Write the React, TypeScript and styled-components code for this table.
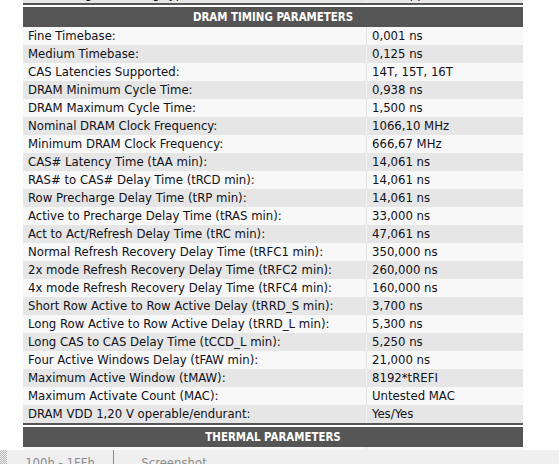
import styled, { createGlobalStyle } from "styled-components";

const GlobalStyle = createGlobalStyle`
  html, body {
    margin: 0;
    padding: 0;
    background: #ffffff;
    overflow: hidden;
  }
  body {
    font-family: "DejaVu Sans Condensed", "DejaVu Sans", Verdana, sans-serif;
    font-size: 13px;
    color: #101018;
  }
`;

type Row = [string, string];

const previousRow: Row = ["Module Signal Loading Type:", "Not supported"];

const timingRows: Row[] = [
  ["Fine Timebase:", "0,001 ns"],
  ["Medium Timebase:", "0,125 ns"],
  ["CAS Latencies Supported:", "14T, 15T, 16T"],
  ["DRAM Minimum Cycle Time:", "0,938 ns"],
  ["DRAM Maximum Cycle Time:", "1,500 ns"],
  ["Nominal DRAM Clock Frequency:", "1066,10 MHz"],
  ["Minimum DRAM Clock Frequency:", "666,67 MHz"],
  ["CAS# Latency Time (tAA min):", "14,061 ns"],
  ["RAS# to CAS# Delay Time (tRCD min):", "14,061 ns"],
  ["Row Precharge Delay Time (tRP min):", "14,061 ns"],
  ["Active to Precharge Delay Time (tRAS min):", "33,000 ns"],
  ["Act to Act/Refresh Delay Time (tRC min):", "47,061 ns"],
  ["Normal Refresh Recovery Delay Time (tRFC1 min):", "350,000 ns"],
  ["2x mode Refresh Recovery Delay Time (tRFC2 min):", "260,000 ns"],
  ["4x mode Refresh Recovery Delay Time (tRFC4 min):", "160,000 ns"],
  ["Short Row Active to Row Active Delay (tRRD_S min):", "3,700 ns"],
  ["Long Row Active to Row Active Delay (tRRD_L min):", "5,300 ns"],
  ["Long CAS to CAS Delay Time (tCCD_L min):", "5,250 ns"],
  ["Four Active Windows Delay (tFAW min):", "21,000 ns"],
  ["Maximum Active Window (tMAW):", "8192*tREFI"],
  ["Maximum Activate Count (MAC):", "Untested MAC"],
  ["DRAM VDD 1,20 V operable/endurant:", "Yes/Yes"],
];

const thermalRows: Row[] = [["Thermal Sensor:", "Incorporated"]];

const Viewport = styled.div`
  height: 450px;
  overflow: hidden;
`;

const Sheet = styled.div`
  width: 500px;
  margin: -15px 0 0 23px;
`;

const Section = styled.div`
  border-top: 2px solid #555555;
  padding-top: 2px;
`;

const SectionTitle = styled.div`
  height: 20px;
  background: #555555;
  color: #ffffff;
  font-weight: bold;
  font-size: 11.4px;
  line-height: 20px;
  text-align: center;
`;

const DataRow = styled.div<{ $odd: boolean }>`
  display: grid;
  grid-template-columns: 344px 1fr;
  height: 18px;
  line-height: 18px;
  background: ${({ $odd }) => ($odd ? "#f8f8f8" : "#e6e6e6")};
`;

const Label = styled.div<{ $odd: boolean }>`
  padding-left: 5px;
  white-space: nowrap;
  overflow: hidden;
  border-right: 1px solid ${({ $odd }) => ($odd ? "#e4e4e4" : "#f2f2f2")};
`;

const Value = styled.div`
  padding-left: 5px;
  white-space: nowrap;
`;

const TabBar = styled.div`
  display: flex;
  height: 14px;
  overflow: hidden;
  background: #efefef;
  color: #8c8c8c;
`;

const Grip = styled.div`
  width: 7px;
  background-color: #efefef;
  background-image: repeating-conic-gradient(#b8b8b8 0 25%, #efefef 0 50%);
  background-size: 2px 2px;
`;

const Tab = styled.div<{ $width: number }>`
  width: ${({ $width }) => $width}px;
  text-align: center;
  padding-top: 5px;
  line-height: 16px;
  font-size: 13px;
`;

const TabDivider = styled.div`
  width: 1px;
  background: #8a8a8a;
`;

function Rows({ rows, startOdd }: { rows: Row[]; startOdd: boolean }) {
  return (
    <>
      {rows.map(([label, value], i) => {
        const odd = i % 2 === 0 ? startOdd : !startOdd;
        return (
          <DataRow key={label} $odd={odd}>
            <Label $odd={odd}>{label}</Label>
            <Value>{value}</Value>
          </DataRow>
        );
      })}
    </>
  );
}

export default function App() {
  return (
    <>
      <GlobalStyle />
      <Viewport>
        <Sheet>
          <Rows rows={[previousRow]} startOdd={false} />
          <Section>
            <SectionTitle>DRAM TIMING PARAMETERS</SectionTitle>
            <Rows rows={timingRows} startOdd={true} />
          </Section>
          <Section>
            <SectionTitle>THERMAL PARAMETERS</SectionTitle>
            <Rows rows={thermalRows} startOdd={true} />
          </Section>
        </Sheet>
      </Viewport>
      <TabBar>
        <Grip />
        <Tab $width={106}>100h - 1FFh</Tab>
        <TabDivider />
        <Tab $width={120}>Screenshot</Tab>
      </TabBar>
    </>
  );
}
